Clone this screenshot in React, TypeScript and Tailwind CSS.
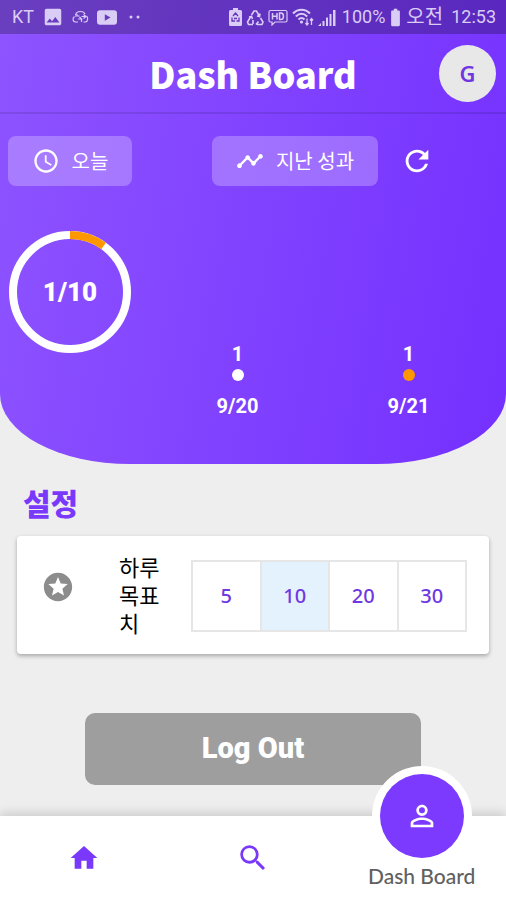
import React, { useState } from "react";
import {
  MdBatteryFull,
  MdHome,
  MdImage,
  MdPersonOutline,
  MdRefresh,
  MdSchedule,
  MdSearch,
  MdStars,
  MdTimeline,
} from "react-icons/md";

const GOALS = [5, 10, 20, 30];

const HISTORY = [
  { date: "9/20", count: 1, today: false },
  { date: "9/21", count: 1, today: true },
];

function StatusBar() {
  return (
    <div className="flex h-[34px] items-center justify-between bg-black/25 pl-3 pr-2.5 font-['Roboto','Noto_Sans_CJK_KR',sans-serif] text-lg text-[#d9ccf5]">
      <div className="flex items-center gap-2">
        <span>KT</span>
        <MdImage className="size-[22px]" />
        <svg className="h-4 w-[17px]" viewBox="0 0 17 16" fill="none" stroke="currentColor" strokeWidth="1.2">
          <path d="M3.500 6C4 3.500 6 2.500 8.500 2.500c2.500 0 4 1 4.500 2.500M2.500 7.500C0 9.500 1 13 3.500 13H6M14.500 7c1.800 1.500 1.500 5.500-1 6h-2" />
          <path d="M3 7h4.500M5 5v2M6 10h3.500l-2-2M11.500 5.500l2.500 2-2.500 2M9.500 7.500H14M9.500 13V10.500" />
        </svg>
        <svg className="h-[15px] w-5" viewBox="0 0 20 15">
          <path
            fill="currentColor"
            fillRule="evenodd"
            d="M3 .3h14a3 3 0 0 1 3 3v8.400a3 3 0 0 1-3 3H3a3 3 0 0 1-3-3V3.300a3 3 0 0 1 3-3zM7.800 4.300v6.400l5.700-3.200z"
          />
        </svg>
        <svg className="ml-1 h-2 w-3" viewBox="0 0 12 8" fill="currentColor">
          <circle cx="2" cy="4" r="1.500" />
          <circle cx="9" cy="4" r="1.500" />
        </svg>
      </div>

      <div className="flex items-center gap-1">
        <svg className="h-[18px] w-[13px]" viewBox="0 0 13 18">
          <path
            fill="currentColor"
            d="M4 0h5v2h2.500A1.500 1.500 0 0 1 13 3.500v13a1.500 1.500 0 0 1-1.500 1.500h-10A1.500 1.500 0 0 1 0 16.500v-13A1.500 1.500 0 0 1 1.500 2H4z"
          />
          <path d="M4 8l2.500-3L9 8M3 9.500v3.500h3M10 9.500v3.500H7.500M5 10.500h3" fill="none" stroke="#6333bb" strokeWidth="1.300" />
        </svg>
        <svg className="h-[17px] w-[18px]" viewBox="0 0 18 17" fill="none" stroke="currentColor" strokeWidth="1.600">
          <path d="M5.500 6L8 2h2.500L13 6.500M11 7l2.500.5.500-3M4.500 8L1.500 13l1 2.500H7M3 8l2.500-.5 1 2.500M14.500 9l2.500 4-1 2.500h-5M12.500 12.500l-2.500 3M7 11v4" />
        </svg>
        <svg className="h-[17px] w-5" viewBox="0 0 20 17" fill="none" stroke="currentColor" strokeWidth="1.200">
          <path d="M2.500 1.500h15a1.500 1.500 0 0 1 1.500 1.500v8.500a1.500 1.500 0 0 1-1.500 1.500H7l-3 3v-3H2.500A1.500 1.500 0 0 1 1 11.500V3a1.500 1.500 0 0 1 1.500-1.500z" />
          <path d="M4.500 4v6.500M9 4v6.500M4.500 7.200H9M11.500 4v6.500h1.500c3.300 0 3.300-6.500 0-6.500z" strokeWidth="1.500" />
        </svg>
        <svg className="h-[18px] w-[22px]" viewBox="0 0 22 18" fill="none" stroke="currentColor" strokeWidth="2">
          <path d="M1 5.500C6 .5 13 .5 18 5.500M3.800 8.500C7.500 5 11.500 5 15.200 8.500M6.500 11.500c2-2 4-2 6 0" />
          <circle cx="9.500" cy="14" r="1.600" fill="currentColor" stroke="none" />
          <path d="M15 10.500v6M13.500 15l1.500 2 1.500-2M19.500 17v-6M18 12.500l1.500-2 1.500 2" strokeWidth="1.300" />
        </svg>
        <svg className="h-[17px] w-[18px]" viewBox="0 0 18 17" fill="currentColor">
          <path d="M0 17l3-3v3zM4.500 12h2v5h-2zM8 8.500h2V17H8zM11.500 5h2v12h-2zM15 1h2.500v16H15z" />
        </svg>
        <span className="ml-0.5">100%</span>
        <MdBatteryFull className="-mx-1 size-[21px]" />
        <span className="text-xl">오전</span>
        <span className="ml-1">12:53</span>
      </div>
    </div>
  );
}

function ProgressRing({ done, goal }: { done: number; goal: number }) {
  const r = 57;
  const length = 2 * Math.PI * r;

  return (
    <div className="grid size-[122px] place-items-center">
      <svg className="col-start-1 row-start-1 size-full -rotate-90" viewBox="0 0 122 122" fill="none" strokeWidth="8">
        <circle cx="61" cy="61" r={r} stroke="#fff" />
        <circle cx="61" cy="61" r={r} stroke="#ff9800" strokeDasharray={`${(length * done) / goal} ${length}`} />
      </svg>
      <span className="col-start-1 row-start-1 font-['Roboto',sans-serif] text-[26px] font-black">
        {done}/{goal}
      </span>
    </div>
  );
}

export default function App() {
  const [goal, setGoal] = useState(10);

  return (
    <div className="flex min-h-screen flex-col bg-[#eeeeee] font-['Noto_Sans_CJK_KR',sans-serif]">
      <div className="rounded-b-[130px_70px] bg-linear-[100deg,#8e54ff,#7430ff] pb-[46px] text-white">
        <StatusBar />

        <header className="grid h-20 grid-cols-[1fr_auto_1fr] items-center border-b-2 border-black/10 px-2.5">
          <h1 className="col-start-2 text-4xl font-black">Dash Board</h1>
          <button
            aria-label="Google"
            className="size-[57px] justify-self-end rounded-full bg-[#e8e8e8] font-['Noto_Sans',sans-serif] text-[22px] font-semibold text-[#7038e0]"
          >
            G
          </button>
        </header>

        <div className="flex gap-5 px-2 pt-[22px]">
          <section className="flex flex-col items-center gap-[45px]">
            <button className="flex h-[50px] w-[124px] items-center justify-center gap-3 rounded-lg bg-white/25 text-xl">
              <MdSchedule className="size-7" />
              오늘
            </button>
            <ProgressRing done={1} goal={10} />
          </section>

          <section className="flex flex-1 flex-col">
            <div className="flex items-center pl-[60px]">
              <button className="flex h-[50px] w-[166px] items-center justify-center gap-3 rounded-lg bg-white/25 text-xl">
                <MdTimeline className="size-7" />
                지난 성과
              </button>
              <button aria-label="새로고침" className="ml-[22px]">
                <MdRefresh className="size-[34px]" />
              </button>
            </div>
            <ul className="mt-[156px] flex pr-1 font-['Roboto',sans-serif] text-xl font-bold">
              {HISTORY.map((day) => (
                <li key={day.date} className="flex flex-1 flex-col items-center">
                  <span className="leading-6">{day.count}</span>
                  <span className={`my-[3px] size-3 rounded-full ${day.today ? "bg-[#ff9800]" : "bg-white"}`} />
                  <span className="mt-2.5 leading-6">{day.date}</span>
                </li>
              ))}
            </ul>
          </section>
        </div>
      </div>

      <main className="flex flex-1 flex-col px-[17px]">
        <h2 className="mt-[18px] px-1.5 text-[30px] leading-10 font-black text-[#7a38fb]">설정</h2>

        <section className="mt-[14px] flex items-center rounded bg-white pt-4 pb-[18px] pr-[22px] pl-6 shadow-[0_2px_4px_rgba(0,0,0,0.3)]">
          <MdStars className="mb-3.5 size-[34px] shrink-0 text-[#8c8c8c]" />
          <p id="goal" className="ml-11 w-11 text-[22px] leading-7 break-all text-black">
            하루 목표치
          </p>
          <div role="group" aria-labelledby="goal" className="mt-1 ml-7 flex flex-1 border-2 border-r-0 border-[#e6e6e6]">
            {GOALS.map((n) => (
              <button
                key={n}
                aria-pressed={n === goal}
                onClick={() => setGoal(n)}
                className={`h-[68px] flex-1 border-r-2 border-[#e6e6e6] font-['Noto_Sans',sans-serif] text-xl font-medium text-[#7038e0] ${
                  n === goal ? "bg-[#e3f2fd]" : "bg-white"
                }`}
              >
                {n}
              </button>
            ))}
          </div>
        </section>

        <button className="mt-[59px] mb-7 h-[72px] w-[71%] self-center rounded-[10px] bg-[#9e9e9e] font-['Roboto',sans-serif] text-[29px] font-black text-white">
          Log Out
        </button>
      </main>

      <nav className="grid h-[84px] grid-cols-3 bg-white text-[#7a38fb] shadow-[0_-3px_10px_rgba(0,0,0,0.15)]">
        <a href="#home" aria-label="Home" className="flex items-center justify-center">
          <MdHome className="size-8" />
        </a>
        <a href="#search" aria-label="Search" className="flex items-center justify-center">
          <MdSearch className="size-[34px]" />
        </a>
        <a href="#dashboard" className="-mt-[50px] flex flex-col items-center">
          <span className="flex size-[100px] shrink-0 items-center justify-center rounded-full bg-white">
            <span className="flex size-[84px] items-center justify-center rounded-full bg-[#7c3aff] text-white">
              <MdPersonOutline className="size-[34px]" />
            </span>
          </span>
          <span className="font-['Lato',sans-serif] text-[21px] leading-5 font-medium text-[#606060]">Dash Board</span>
        </a>
      </nav>
    </div>
  );
}
